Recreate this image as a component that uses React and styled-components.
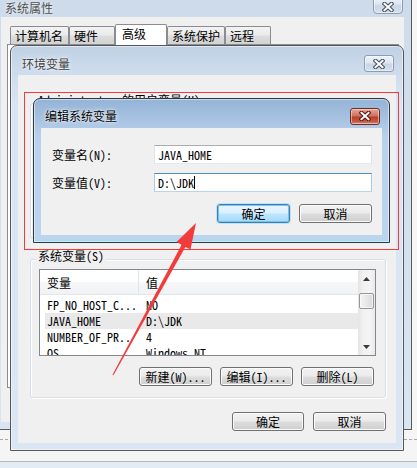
import React from 'react';
import styled, { createGlobalStyle } from 'styled-components';

const UI = `"Noto Sans CJK SC", "Noto Sans", sans-serif`;
const SONG = `"Noto Sans Mono CJK SC", "Liberation Mono", "Noto Sans CJK SC", monospace`;

const GlobalStyle = createGlobalStyle`
  html, body { margin: 0; padding: 0; }
  body { width: 417px; height: 468px; overflow: hidden; background: #f4f4f4; font-family: ${UI}; }
  * { box-sizing: border-box; }
`;

const Desktop = styled.div`
  position: relative;
  width: 417px;
  height: 468px;
  overflow: hidden;
  display: flex;
  flex-direction: column;
  background: #f5f5f5;
`;

const TopRow = styled.div`
  display: flex;
  height: 430px;
`;

const SysWindow = styled.div`
  width: 412px;
  height: 430px;
  border-right: 1px solid #5a5a5a;
  border-bottom: 1px solid #5a5a5a;
  background: linear-gradient(180deg, #cedbea 0%, #d9e5f2 100%);
  display: flex;
  flex-direction: column;
  padding: 0 7px 7px 1px;
`;

const RightGap = styled.div`
  flex: 1;
  background: #f6f6f6;
`;

const SysTitleBar = styled.div`
  height: 17px;
  display: flex;
  align-items: flex-start;
  justify-content: space-between;
`;

const SysTitle = styled.span`
  font: 12px/16px ${UI};
  color: #505050;
  padding-left: 4px;
  text-shadow: 0 0 4px rgba(255, 255, 255, 0.9);
`;

const CloseButton = styled.div`
  width: 30px;
  height: ${p => p.$h || 17}px;
  margin-top: ${p => p.$mt || 0}px;
  margin-right: ${p => p.$mr || 0}px;
  border: 1px solid ${p => (p.$red ? '#6e2b22' : '#8d9db4')};
  border-radius: ${p => (p.$top ? '0 0 4px 4px' : '3px')};
  background: ${p =>
    p.$red
      ? 'linear-gradient(180deg, #e2a798 0%, #d0735f 45%, #b8402b 55%, #c75a44 85%, #dd8c76 100%)'
      : 'linear-gradient(180deg, #eef3f9 0%, #dde6f1 45%, #c9d6e6 55%, #d5e0ec 100%)'};
  box-shadow: inset 0 0 0 1px rgba(255, 255, 255, 0.45);
  display: flex;
  align-items: center;
  justify-content: center;
  padding-top: ${p => p.$pt || 0}px;
`;

const CloseGlyph = ({ dark = '#4b5565' }) => (
  <svg width="12" height="10" viewBox="0 0 12 10">
    <path d="M2.5 1.8 L9.5 8.2 M9.5 1.8 L2.5 8.2" stroke={dark} strokeWidth="4.2" strokeLinecap="square" fill="none" />
    <path d="M2.5 1.8 L9.5 8.2 M9.5 1.8 L2.5 8.2" stroke="#ffffff" strokeWidth="2" strokeLinecap="square" fill="none" />
  </svg>
);

const SysClient = styled.div`
  flex: 1;
  background: #f0f0f0;
  display: flex;
  flex-direction: column;
`;

const TabStrip = styled.div`
  display: flex;
  align-items: flex-end;
  height: 20px;
  margin-top: 7px;
  padding-left: 9px;
  position: relative;
  z-index: 1;
`;

const Tab = styled.div`
  width: ${p => p.$w}px;
  height: ${p => (p.$active ? 21 : 18)}px;
  margin-bottom: ${p => (p.$active ? -1 : 0)}px;
  border: 1px solid #898c95;
  border-bottom: none;
  border-radius: 2px 2px 0 0;
  background: ${p =>
    p.$active ? '#ffffff' : 'linear-gradient(180deg, #f3f3f3 0%, #ebebeb 45%, #dddddd 55%, #d2d2d2 100%)'};
  font: 12px/16px ${UI};
  color: #000;
  padding: ${p => (p.$active ? '1px 0 0 6px' : '1px 0 0 4px')};
  white-space: nowrap;
`;

const TabPanel = styled.div`
  margin-left: 6px;
  width: 392px;
  height: 344px;
  border: 1px solid #898c95;
  background: #ffffff;
`;

const BottomStrip = styled.div`
  flex: 1;
  display: flex;
  flex-direction: column;
`;

const DashedRule = styled.div`
  margin-top: 9px;
  border-top: 1px dashed #a8a8a8;
`;

const BottomBar = styled.div`
  margin-top: 21px;
  flex: 1;
  border-top: 1px solid #b9b9b9;
  background: #e3ebf5;
`;

const Dialog = styled.div`
  position: absolute;
  left: ${p => p.$x}px;
  top: ${p => p.$y}px;
  width: ${p => p.$w}px;
  height: ${p => p.$h}px;
  z-index: 2;
  border: 1px solid ${p => (p.$active ? '#2e3642' : '#565656')};
  border-radius: 7px 7px 0 0;
  background: ${p =>
    p.$active
      ? 'linear-gradient(180deg, #94b3d6 0px, #adc7e5 26px, #b9d2ec 40px, #bcd5ee 100%)'
      : 'linear-gradient(180deg, #c0d1e4 0px, #cddced 26px, #d8e5f2 60px, #dae6f3 100%)'};
  box-shadow: inset 0 0 0 1px rgba(255, 255, 255, 0.5)${p => (p.$active ? ', inset 0 -2px 0 #9fdcf2' : '')};
  display: flex;
  flex-direction: column;
  padding: 0 7px 7px;
`;

const TitleBar = styled.div`
  height: 29px;
  padding-top: ${p => p.$pt}px;
  display: flex;
  align-items: center;
  justify-content: space-between;
`;

const DialogTitle = styled.span`
  font: 12px/16px ${UI};
  color: ${p => (p.$active ? '#000' : '#3f3f3f')};
  padding-left: 4px;
  text-shadow: 0 0 5px rgba(255, 255, 255, 0.95), 0 0 2px rgba(255, 255, 255, 0.9);
`;

const ClientArea = styled.div`
  flex: 1;
  background: #f0f0f0;
  display: flex;
  flex-direction: column;
  padding: ${p => p.$pad || '0'};
`;

const GroupBox = styled.div`
  position: relative;
  width: 356px;
  height: ${p => p.$h}px;
  margin: ${p => p.$mt}px 0 0 12px;
  border: 1px solid #d5dfe5;
  border-radius: 3px;
  box-shadow: inset 1px 1px 0 #fff, 1px 1px 0 #fff;
  padding: 9px 0 0 8px;
  display: flex;
  flex-direction: column;
`;

const Legend = styled.span`
  position: absolute;
  left: 5px;
  top: -11px;
  padding: 0 2px;
  background: #f0f0f0;
  font: 12px/14px ${SONG};
  color: #000;
  white-space: nowrap;
`;

const ListView = styled.div`
  width: 337px;
  height: 87px;
  border: 1px solid #828790;
  background: #fff;
  display: flex;
`;

const ListBody = styled.div`
  flex: 1;
  display: flex;
  flex-direction: column;
  overflow: hidden;
`;

const HeaderRow = styled.div`
  height: 25px;
  flex: none;
  display: flex;
  background: linear-gradient(180deg, #ffffff 0%, #ffffff 50%, #f6f7f9 51%, #f1f2f4 100%);
  border-bottom: 1px solid #e4e6e9;
  margin-bottom: 2px;
`;

const HeaderCell = styled.div`
  width: ${p => (p.$w ? `${p.$w}px` : 'auto')};
  flex: ${p => (p.$w ? 'none' : 1)};
  border-right: ${p => (p.$w ? '1px solid #e3e4e6' : 'none')};
  padding: 5px 0 0 7px;
  font: 12px/16px ${UI};
  color: #000;
`;

const Row = styled.div`
  height: 16px;
  flex: none;
  margin-left: 5px;
  display: grid;
  grid-template-columns: 94px 1fr;
  background: ${p => (p.$selected ? '#e9e9e9' : 'transparent')};
  font: 12px/16px ${SONG};
  color: #000;
  white-space: nowrap;
`;

const Cell = styled.span`
  padding-left: ${p => p.$pl}px;
  overflow: hidden;
`;

const ScrollBar = styled.div`
  width: 17px;
  display: flex;
  flex-direction: column;
  align-items: center;
  background: linear-gradient(90deg, #e4e4e4 0%, #f1f1f1 30%, #f4f4f4 70%, #e9e9e9 100%);
`;

const ArrowBox = styled.div`
  width: 17px;
  height: 17px;
  display: flex;
  align-items: center;
  justify-content: center;
  margin-top: ${p => (p.$bottom ? 'auto' : '0')};
`;

const Thumb = styled.div`
  width: 15px;
  height: 16px;
  margin-top: 6px;
  border: 1px solid #979797;
  border-radius: 2px;
  background: linear-gradient(90deg, #f4f4f4 0%, #e8e8e8 50%, #d9d9d9 100%);
  box-shadow: inset 0 0 0 1px rgba(255, 255, 255, 0.6);
`;

const ButtonRow = styled.div`
  display: flex;
  justify-content: flex-end;
  gap: ${p => p.$gap}px;
  margin-top: ${p => p.$mt}px;
  margin-right: ${p => p.$mr}px;
`;

const Button = styled.div`
  width: ${p => p.$w}px;
  height: 19px;
  border: 1px solid ${p => (p.$default ? '#3c7fb1' : '#707070')};
  border-radius: 3px;
  background: ${p =>
    p.$default
      ? 'linear-gradient(180deg, #eaf6fd 0%, #d9f0fc 48%, #bee6fd 52%, #a7d9f5 100%)'
      : 'linear-gradient(180deg, #f2f2f2 0%, #ebebeb 48%, #dddddd 52%, #cfcfcf 100%)'};
  box-shadow: ${p =>
    p.$default ? 'inset 0 0 0 1px #73c4f0, 0 0 0 1px rgba(120, 190, 235, 0.35)' : 'inset 0 0 0 1px #fbfbfb'};
  font: 12px/17px ${SONG};
  color: #000;
  text-align: center;
  white-space: nowrap;
`;

const FieldRow = styled.div`
  display: flex;
  align-items: center;
  height: 19px;
  margin-top: ${p => p.$mt || 0}px;
`;

const FieldLabel = styled.span`
  width: 102px;
  font: 12px/16px ${SONG};
  color: #000;
  white-space: nowrap;
`;

const TextBox = styled.div`
  width: 218px;
  height: 19px;
  border: 1px solid;
  border-color: ${p =>
    p.$focused ? '#4d8bc0 #a9cbe8 #b9d5ee #a9cbe8' : '#abadb3 #dbdfe6 #e3e9ef #e2e3ea'};
  background: #fff;
  padding-left: 3px;
  font: 12px/17px ${SONG};
  color: #000;
  display: flex;
  align-items: center;
  white-space: nowrap;
`;

const Caret = styled.span`
  display: inline-block;
  width: 1px;
  height: 13px;
  background: #000;
`;

const RedFrame = styled.div`
  position: absolute;
  left: 24px;
  top: 92px;
  width: 375px;
  height: 158px;
  border: 1px solid #f23b3b;
  z-index: 3;
  pointer-events: none;
`;

const Overlay = styled.svg`
  position: absolute;
  left: 0;
  top: 0;
  z-index: 5;
  pointer-events: none;
`;

const Triangle = ({ up }) => (
  <svg width="7" height="4" viewBox="0 0 7 4">
    <path d={up ? 'M0 4 L3.5 0 L7 4 Z' : 'M0 0 L3.5 4 L7 0 Z'} fill="#3a3a3a" />
  </svg>
);

const tabs = [
  { label: '计算机名', w: 59 },
  { label: '硬件', w: 46 },
  { label: '高级', w: 52, active: true },
  { label: '系统保护', w: 58 },
  { label: '远程', w: 46 },
];

const sysVars = [
  ['FP_NO_HOST_C...', 'NO'],
  ['JAVA_HOME', 'D:\\JDK', true],
  ['NUMBER_OF_PR..', '4'],
  ['OS', 'Windows_NT'],
];

export default function App() {
  return (
    <>
      <GlobalStyle />
      <Desktop>
        <TopRow>
          <SysWindow>
            <SysTitleBar>
              <SysTitle>系统属性</SysTitle>
              <CloseButton $top $h={18} $mt={-4} $mr={1} $pt={3}>
                <CloseGlyph />
              </CloseButton>
            </SysTitleBar>
            <SysClient>
              <TabStrip>
                {tabs.map(t => (
                  <Tab key={t.label} $w={t.w} $active={t.active}>
                    {t.label}
                  </Tab>
                ))}
              </TabStrip>
              <TabPanel />
            </SysClient>
          </SysWindow>
          <RightGap />
        </TopRow>
        <BottomStrip>
          <DashedRule />
          <BottomBar />
        </BottomStrip>

        <Dialog $x={10} $y={45} $w={394} $h={406}>
          <TitleBar $pt={6}>
            <DialogTitle>环境变量</DialogTitle>
            <CloseButton $h={17} $mr={2}>
              <CloseGlyph />
            </CloseButton>
          </TitleBar>
          <ClientArea>
            <GroupBox $h={136} $mt={28}>
              <Legend>Administrator 的用户变量(U)</Legend>
            </GroupBox>
            <GroupBox $h={139} $mt={20}>
              <Legend>系统变量(S)</Legend>
              <ListView>
                <ListBody>
                  <HeaderRow>
                    <HeaderCell $w={99}>变量</HeaderCell>
                    <HeaderCell>值</HeaderCell>
                  </HeaderRow>
                  {sysVars.map(([k, v, sel]) => (
                    <Row key={k} $selected={sel}>
                      <Cell $pl={2}>{k}</Cell>
                      <Cell $pl={7}>{v}</Cell>
                    </Row>
                  ))}
                </ListBody>
                <ScrollBar>
                  <ArrowBox>
                    <Triangle up />
                  </ArrowBox>
                  <Thumb />
                  <ArrowBox $bottom>
                    <Triangle />
                  </ArrowBox>
                </ScrollBar>
              </ListView>
              <ButtonRow $gap={8} $mt={11} $mr={11}>
                <Button $w={73}>新建(W)...</Button>
                <Button $w={73}>编辑(I)...</Button>
                <Button $w={73}>删除(L)</Button>
              </ButtonRow>
            </GroupBox>
            <ButtonRow $gap={9} $mt={14} $mr={10}>
              <Button $w={72}>确定</Button>
              <Button $w={73}>取消</Button>
            </ButtonRow>
          </ClientArea>
        </Dialog>

        <RedFrame />

        <Dialog $x={33} $y={98} $w={357} $h={145} $active>
          <TitleBar $pt={5}>
            <DialogTitle $active>编辑系统变量</DialogTitle>
            <CloseButton $red $h={17} $mr={2}>
              <CloseGlyph dark="#5a1a12" />
            </CloseButton>
          </TitleBar>
          <ClientArea $pad="17px 10px 0 11px">
            <FieldRow>
              <FieldLabel>变量名(N):</FieldLabel>
              <TextBox>JAVA_HOME</TextBox>
            </FieldRow>
            <FieldRow $mt={9}>
              <FieldLabel>变量值(V):</FieldLabel>
              <TextBox $focused>
                D:\JDK
                <Caret />
              </TextBox>
            </FieldRow>
            <ButtonRow $gap={9} $mt={12} $mr={0}>
              <Button $w={73} $default>确定</Button>
              <Button $w={73}>取消</Button>
            </ButtonRow>
          </ClientArea>
        </Dialog>

        <Overlay width="417" height="468" viewBox="0 0 417 468">
          <polygon
            points="196,223 190.5,249.6 185.4,246.9 113.5,375.3 112.5,374.7 181.6,244.7 176.5,242"
            fill="#f33b3b"
          />
        </Overlay>
      </Desktop>
    </>
  );
}
